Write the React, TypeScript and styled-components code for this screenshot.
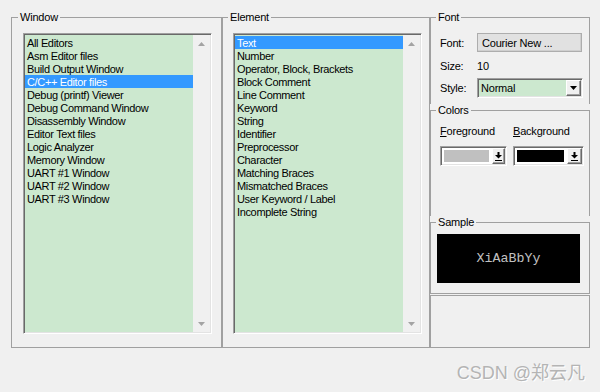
import React from "react";
import styled, { createGlobalStyle } from "styled-components";

const Global = createGlobalStyle`
  html, body { margin: 0; padding: 0; background: #f0f0f0; }
  body { font-family: "Liberation Sans", Arial, sans-serif; font-size: 11px; color: #000; }
  * { box-sizing: border-box; }
`;

const Page = styled.div`
  width: 600px;
  height: 392px;
  padding: 11px 0 0 11px;
  display: flex;
  flex-direction: column;
  overflow: hidden;
`;

const MainRow = styled.div`
  display: flex;
  height: 337px;
`;

const GroupBox = styled.fieldset<{ $w?: number; $open?: boolean }>`
  margin: 0;
  padding: 0;
  min-width: 0;
  border: 1px solid #a0a0a0;
  ${(p) => (p.$open ? "border-bottom: none;" : "")}
  ${(p) => (p.$w ? `width: ${p.$w}px;` : "")}
  display: flex;
  flex-direction: column;
`;

const Caption = styled.legend<{ $indent: number }>`
  font-size: 11px;
  line-height: 13px;
  padding: 0 2px;
  margin-left: ${(p) => p.$indent}px;
  letter-spacing: -0.2px;
`;

const GroupInner = styled.div<{ $pad: string }>`
  padding: ${(p) => p.$pad};
  display: flex;
  flex-direction: column;
`;

const ListBox = styled.div`
  width: 189px;
  height: 301px;
  display: flex;
  border: 1px solid;
  border-color: #a0a0a0 #ffffff #ffffff #a0a0a0;
  box-shadow: inset 1px 1px 0 #696969, inset -1px -1px 0 #e3e3e3;
  padding: 1px;
`;

const ListItems = styled.div`
  flex: 1;
  background: #cce8cf;
  padding-top: 1px;
`;

const ListItem = styled.div<{ $sel?: boolean }>`
  height: 13px;
  line-height: 14px;
  padding-left: 2px;
  white-space: nowrap;
  letter-spacing: -0.35px;
  background: ${(p) => (p.$sel ? "#3399ff" : "transparent")};
  color: ${(p) => (p.$sel ? "#ffffff" : "#000000")};
`;

const ScrollBar = styled.div`
  width: 17px;
  background: #f0f0f0;
  display: flex;
  flex-direction: column;
  justify-content: space-between;
`;

const ScrollArrow = styled.div`
  height: 17px;
  display: flex;
  align-items: center;
  justify-content: center;
`;

const RightColumn = styled.div`
  width: 160px;
  display: flex;
  flex-direction: column;
`;

const FieldRow = styled.div<{ $mt?: number; $h: number }>`
  display: flex;
  align-items: center;
  height: ${(p) => p.$h}px;
  margin-top: ${(p) => p.$mt ?? 0}px;
`;

const FieldLabel = styled.span`
  width: 37px;
  letter-spacing: -0.2px;
`;

const PushButton = styled.div`
  width: 105px;
  height: 19px;
  background: #e1e1e1;
  border: 1px solid #adadad;
  box-shadow: inset -1px -1px 0 #cfcfcf;
  display: flex;
  align-items: center;
  padding-left: 4px;
  letter-spacing: -0.2px;
`;

const Combo = styled.div<{ $w: number; $bg: string }>`
  width: ${(p) => p.$w}px;
  height: 20px;
  border: 1px solid;
  border-color: #a0a0a0 #ffffff #ffffff #a0a0a0;
  box-shadow: inset 1px 1px 0 #696969, inset -1px -1px 0 #e3e3e3;
  padding: 1px;
  background: ${(p) => p.$bg};
  display: flex;
  align-items: stretch;
`;

const ComboText = styled.div`
  flex: 1;
  display: flex;
  align-items: center;
  padding-left: 2px;
  letter-spacing: -0.2px;
`;

const DropButton = styled.div<{ $w: number }>`
  width: ${(p) => p.$w}px;
  background: #f0f0f0;
  border: 1px solid;
  border-color: #ffffff #696969 #696969 #ffffff;
  box-shadow: inset -1px -1px 0 #a0a0a0;
  display: flex;
  align-items: center;
  justify-content: center;
`;

const Swatch = styled.div<{ $color: string }>`
  flex: 1;
  margin: 2px 3px 2px 2px;
  background: ${(p) => p.$color};
`;

const ColorLabels = styled.div`
  display: flex;
  height: 13px;
  line-height: 13px;
  letter-spacing: -0.2px;
`;

const ColorLabel = styled.span<{ $w: number }>`
  width: ${(p) => p.$w}px;
`;

const ColorRow = styled.div`
  display: flex;
  gap: 6px;
  margin-top: 8px;
`;

const SampleBox = styled.div`
  width: 143px;
  height: 49px;
  background: #000;
  color: #c0c0c0;
  font-family: "Liberation Mono", "Courier New", monospace;
  font-size: 13.3px;
  display: flex;
  align-items: center;
  justify-content: center;
`;

const EmptyPanel = styled.div`
  flex: 1;
  margin-top: 1px;
  border: 1px solid #a0a0a0;
`;

const Watermark = styled.div`
  margin-top: 15px;
  padding-right: 15px;
  text-align: right;
  font-family: "Liberation Sans", "Noto Sans CJK SC", sans-serif;
  font-size: 18px;
  line-height: 20px;
  color: #b4b4b4;
  text-shadow: 1px 1px 0 #ffffff;
`;

const UpArrow = () => (
  <svg width="7" height="4" viewBox="0 0 7 4">
    <polygon points="0,4 7,4 3.5,0" fill="#a3a3a3" />
  </svg>
);
const DownArrow = ({ color = "#a3a3a3" }: { color?: string }) => (
  <svg width="7" height="4" viewBox="0 0 7 4">
    <polygon points="0,0 7,0 3.5,4" fill={color} />
  </svg>
);
const BarArrow = () => (
  <svg width="7" height="9" viewBox="0 0 7 9">
    <rect x="2.5" y="0" width="2" height="3" fill="#000" />
    <polygon points="0,3 7,3 3.5,6.5" fill="#000" />
    <rect x="0" y="8" width="7" height="1" fill="#000" />
  </svg>
);

const windows = [
  "All Editors",
  "Asm Editor files",
  "Build Output Window",
  "C/C++ Editor files",
  "Debug (printf) Viewer",
  "Debug Command Window",
  "Disassembly Window",
  "Editor Text files",
  "Logic Analyzer",
  "Memory Window",
  "UART #1 Window",
  "UART #2 Window",
  "UART #3 Window",
];

const elements = [
  "Text",
  "Number",
  "Operator, Block, Brackets",
  "Block Comment",
  "Line Comment",
  "Keyword",
  "String",
  "Identifier",
  "Preprocessor",
  "Character",
  "Matching Braces",
  "Mismatched Braces",
  "User Keyword / Label",
  "Incomplete String",
];

const List = ({ items, selected }: { items: string[]; selected: number }) => (
  <ListBox>
    <ListItems>
      {items.map((t, i) => (
        <ListItem key={t} $sel={i === selected}>
          {t}
        </ListItem>
      ))}
    </ListItems>
    <ScrollBar>
      <ScrollArrow>
        <UpArrow />
      </ScrollArrow>
      <ScrollArrow>
        <DownArrow />
      </ScrollArrow>
    </ScrollBar>
  </ListBox>
);

export default function App() {
  return (
    <Page>
      <Global />
      <MainRow>
        <GroupBox $w={211}>
          <Caption $indent={6}>Window</Caption>
          <GroupInner $pad="9px 0 0 11px">
            <List items={windows} selected={3} />
          </GroupInner>
        </GroupBox>
        <GroupBox $w={208}>
          <Caption $indent={5}>Element</Caption>
          <GroupInner $pad="9px 0 0 10px">
            <List items={elements} selected={0} />
          </GroupInner>
        </GroupBox>
        <RightColumn>
          <GroupBox $open>
            <Caption $indent={5}>Font</Caption>
            <GroupInner $pad="9px 0 6px 9px">
              <FieldRow $h={19}>
                <FieldLabel>Font:</FieldLabel>
                <PushButton>Courier New ...</PushButton>
              </FieldRow>
              <FieldRow $h={13} $mt={7}>
                <FieldLabel>Size:</FieldLabel>
                <span>10</span>
              </FieldRow>
              <FieldRow $h={20} $mt={6}>
                <FieldLabel>Style:</FieldLabel>
                <Combo $w={106} $bg="#cce8cf">
                  <ComboText>Normal</ComboText>
                  <DropButton $w={15}>
                    <DownArrow color="#000" />
                  </DropButton>
                </Combo>
              </FieldRow>
            </GroupInner>
          </GroupBox>
          <GroupBox $open>
            <Caption $indent={5}>Colors</Caption>
            <GroupInner $pad="8px 0 50px 9px">
              <ColorLabels>
                <ColorLabel $w={73}>
                  <u>F</u>oreground
                </ColorLabel>
                <ColorLabel $w={71}>
                  <u>B</u>ackground
                </ColorLabel>
              </ColorLabels>
              <ColorRow>
                <Combo $w={67} $bg="#ffffff">
                  <Swatch $color="#c0c0c0" />
                  <DropButton $w={13}>
                    <BarArrow />
                  </DropButton>
                </Combo>
                <Combo $w={71} $bg="#ffffff">
                  <Swatch $color="#000000" />
                  <DropButton $w={15}>
                    <BarArrow />
                  </DropButton>
                </Combo>
              </ColorRow>
            </GroupInner>
          </GroupBox>
          <GroupBox>
            <Caption $indent={5}>Sample</Caption>
            <GroupInner $pad="5px 0 10px 6px">
              <SampleBox>XiAaBbYy</SampleBox>
            </GroupInner>
          </GroupBox>
          <EmptyPanel />
        </RightColumn>
      </MainRow>
      <Watermark>CSDN @郑云凡</Watermark>
    </Page>
  );
}
